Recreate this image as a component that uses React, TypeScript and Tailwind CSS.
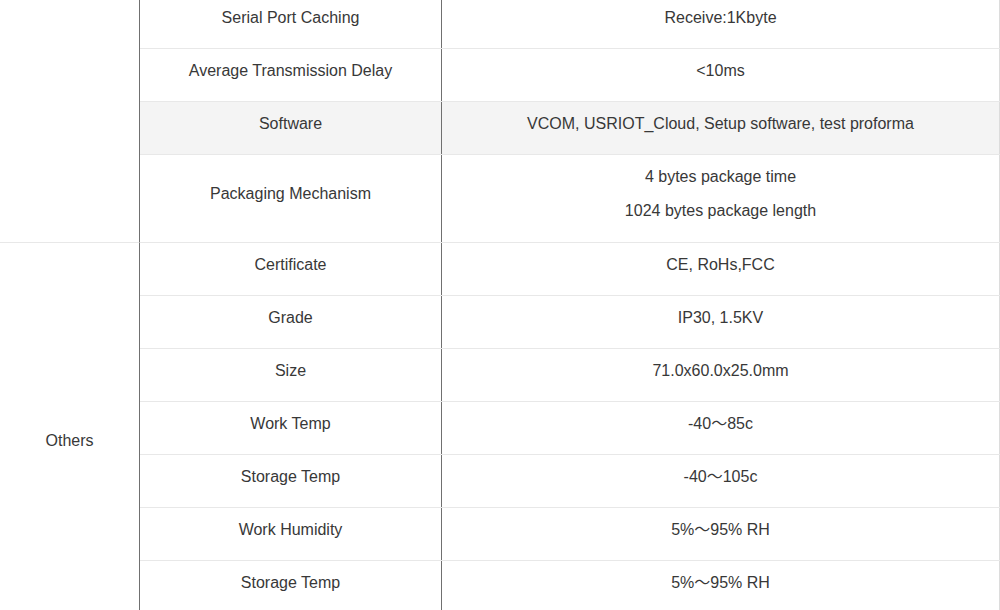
import React from "react";

type Row = { label: string; values: string[]; gray?: boolean; tall?: boolean };

const topRows: Row[] = [
  { label: "Serial Port Caching", values: ["Receive:1Kbyte"] },
  { label: "Average Transmission Delay", values: ["<10ms"] },
  { label: "Software", values: ["VCOM, USRIOT_Cloud, Setup software, test proforma"], gray: true },
  { label: "Packaging Mechanism", values: ["4 bytes package time", "1024 bytes package length"], tall: true },
];

const otherRows: Row[] = [
  { label: "Certificate", values: ["CE, RoHs,FCC"] },
  { label: "Grade", values: ["IP30, 1.5KV"] },
  { label: "Size", values: ["71.0x60.0x25.0mm"] },
  { label: "Work Temp", values: ["-40～85c"] },
  { label: "Storage Temp", values: ["-40～105c"] },
  { label: "Work Humidity", values: ["5%～95% RH"] },
  { label: "Storage Temp", values: ["5%～95% RH"] },
];

function TableRow({ row }: { row: Row }) {
  const h = row.tall ? "h-[88px]" : "h-[53px]";
  const bg = row.gray ? "bg-[#f4f4f4]" : "bg-white";
  return (
    <div className={`flex ${h} ${bg} border-b border-[#e8e8e8]`}>
      <div className="w-[302px] shrink-0 flex items-center justify-center pb-[9px] border-r border-[#707070] text-center">
        {row.label}
      </div>
      <div className="w-[558px] shrink-0 flex flex-col items-center justify-center gap-[10px] pb-[9px] border-r border-[#dcdcdc] text-center">
        {row.values.map((v, i) => (
          <div key={i}>{v}</div>
        ))}
      </div>
    </div>
  );
}

export default function App() {
  return (
    <div
      className="w-[1000px] h-[610px] overflow-hidden bg-white text-[16px] leading-[24px] text-[#383838]"
      style={{ fontFamily: '"Liberation Sans", Arial, "Noto Sans CJK SC", sans-serif' }}
    >
      <div className="flex mt-[-4px]">
        <div className="w-[140px] shrink-0 flex flex-col">
          <div className="h-[247px] border-b border-[#e8e8e8] border-r border-r-[#707070]" />
          <div className="h-[371px] border-b border-[#e8e8e8] border-r border-r-[#707070] flex items-center justify-center pt-[25px]">
            Others
          </div>
        </div>
        <div className="flex flex-col">
          {topRows.map((r, i) => (
            <TableRow key={"t" + i} row={r} />
          ))}
          {otherRows.map((r, i) => (
            <TableRow key={"o" + i} row={r} />
          ))}
        </div>
      </div>
    </div>
  );
}
